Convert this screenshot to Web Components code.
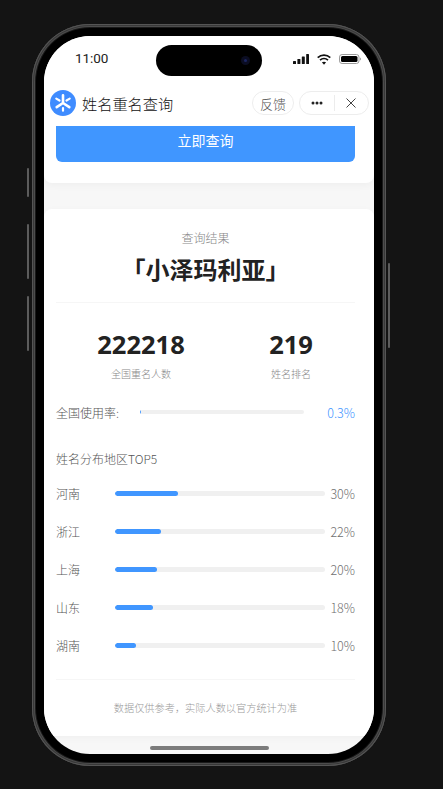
<!DOCTYPE html>
<html lang="zh"><head><meta charset="utf-8">
<style>
html,body{margin:0;padding:0;background:#141414;height:100%;overflow:hidden}
body{font-family:"Noto Sans CJK SC","Noto Sans",sans-serif;font-weight:300}
</style></head>
<body>
<phone-frame>
  <status-bar time="11:00"></status-bar>
  <mini-nav title-text="姓名重名查询"></mini-nav>
  <query-card>立即查询</query-card>
  <result-card>
    <span slot="kicker">查询结果</span>
    <span slot="name">「小泽玛利亚」</span>
    <stat-item slot="stats" value="222218" label="全国重名人数"></stat-item>
    <stat-item slot="stats" value="219" label="姓名排名"></stat-item>
    <usage-row slot="usage" label="全国使用率:" value="0.3"></usage-row>
    <span slot="heading">姓名分布地区TOP5</span>
    <region-row slot="regions" label="河南" value="30"></region-row>
    <region-row slot="regions" label="浙江" value="22"></region-row>
    <region-row slot="regions" label="上海" value="20"></region-row>
    <region-row slot="regions" label="山东" value="18"></region-row>
    <region-row slot="regions" label="湖南" value="10"></region-row>
    <span slot="note">数据仅供参考，实际人数以官方统计为准</span>
  </result-card>
</phone-frame>
<script>
function def(name, html){
  customElements.define(name, class extends HTMLElement{
    connectedCallback(){
      if(this.shadowRoot) return;
      const r=this.attachShadow({mode:'open'});
      r.innerHTML=typeof html==='function'?html(this):html;
    }
  });
}
def('phone-frame',`<style>
:host{display:block;position:relative;box-sizing:border-box;width:354px;height:742px;margin:24px 0 0 32px;border-radius:58px;background:#000;padding:12px;
 box-shadow:inset 0 0 0 1px #555,inset 0 0 0 2px #383838,inset 0 0 0 3px #4c4c4c,inset 0 0 0 4px #1a1a1a}
.screen{display:flex;flex-direction:column;width:330px;height:718px;border-radius:46px;overflow:hidden;background:#f7f7f7;position:relative}
.btn{position:absolute;width:2px;background:#5c5c5c;border-radius:1px}
.l1{left:-5px;top:144px;height:29px}.l2{left:-5px;top:200px;height:55px}.l3{left:-5px;top:272px;height:55px}
.r1{right:-4px;top:239px;height:85px}
.home{position:absolute;left:106px;bottom:4px;width:119px;height:4px;border-radius:2px;background:#7c7c7c}
</style>
<i class="btn l1"></i><i class="btn l2"></i><i class="btn l3"></i><i class="btn r1"></i>
<div class="screen"><slot></slot><div class="home"></div></div>`);
def('status-bar',el=>`<style>
:host{display:flex;align-items:center;justify-content:space-between;height:48px;flex:none;background:#fff;padding:0 13px 2px 31px;box-sizing:border-box;position:relative}
.time{font:400 13.5px/1 Roboto,"Open Sans",sans-serif;color:#222;letter-spacing:-.1px}
.icons{display:flex;align-items:center;gap:8px}
.island{position:absolute;left:112px;top:9px;width:106px;height:31px;border-radius:16px;background:#000}
.cam{position:absolute;right:12px;top:11px;width:9px;height:9px;border-radius:50%;background:#0b0d22}
.cam:after{content:"";position:absolute;left:3px;top:3px;width:3px;height:3px;border-radius:50%;background:#1b2560}
svg{display:block}
</style>
<span class="time">${el.getAttribute('time')}</span>
<div class="island"><div class="cam"></div></div>
<div class="icons">
<svg width="16" height="10" viewBox="0 0 16 10" fill="#111"><rect x="0" y="7" width="3" height="3" rx=".6"/><rect x="4.400" y="5" width="3" height="5" rx=".6"/><rect x="8.800" y="2.500" width="3" height="7.500" rx=".6"/><rect x="13.200" y="0" width="2.800" height="10" rx=".6"/></svg>
<svg width="14" height="11" viewBox="0 0 14 11" fill="none" stroke="#111" stroke-width="1.700"><path d="M.7 3.600C4.300.3 9.700.3 13.300 3.600"/><path d="M3 6.100c2.300-2 5.700-2 8 0"/><path d="M7 10.700 4.900 8.300c1.300-.9 2.900-.9 4.200 0z" fill="#111" stroke="none"/></svg>
<svg width="22" height="10" viewBox="0 0 22 10"><rect x=".5" y=".5" width="19.500" height="9" rx="2.600" fill="none" stroke="#9a9a9a"/><rect x="2" y="2" width="16.500" height="6" rx="1.500" fill="#000"/><path d="M21 3.500c.7.300 1 .9 1 1.500s-.3 1.200-1 1.500z" fill="#9a9a9a"/></svg>
</div>`);
def('mini-nav',el=>`<style>
:host{display:flex;align-items:center;height:42px;flex:none;background:#fff;padding:0 5px 4px 6px;box-sizing:border-box;position:relative;z-index:1}
svg{display:block;flex:none}
.t{margin:0 0 0 6px;font-size:15.200px;font-weight:300;color:#111;flex:1;white-space:nowrap}
.pill{box-sizing:border-box;height:24px;border:1px solid #ededed;border-radius:12px;display:flex;align-items:center;background:#fff}
.fb{width:42px;justify-content:center;font-size:13px;color:#555}
.cap{width:70px;margin-left:5px}
.cap>div{flex:1;display:flex;align-items:center;justify-content:center;height:100%}
.sep{width:1px;height:16px;background:#ececec;flex:none}
</style>
<svg width="26" height="26" viewBox="0 0 26 26"><circle cx="13" cy="13" r="13" fill="#3f8cff"/>
<g stroke="#fff" stroke-width="2.600" stroke-linecap="round" fill="none"><path d="M13 13V5.200M13 13l-6.300 4.200M13 13l6.300 4.200"/><path stroke-width="2.200" d="M6.300 8.600l3.200 1.900M19.700 8.600l-3.200 1.900M13 18v2.700"/></g></svg>
<span class="t">${el.getAttribute('title-text')}</span>
<div class="pill fb">反馈</div>
<div class="pill cap"><div><svg width="12" height="4" viewBox="0 0 12 4" fill="#222"><circle cx="2" cy="2" r="1.500"/><circle cx="6" cy="2" r="1.500"/><circle cx="10" cy="2" r="1.500"/></svg></div><span class="sep"></span><div><svg width="10" height="10" viewBox="0 0 10 10" stroke="#444" stroke-width="1" fill="none"><path d="M.5.500l9 9M9.500.500l-9 9"/></svg></div></div>`);
def('query-card',`<style>
:host{display:block;flex:none;background:#fff;padding:0 19px 21px 12px;border-radius:0 0 8px 8px;box-shadow:0 2px 8px rgba(0,0,0,.04)}
.b{height:36px;background:#4096ff;border-radius:0 0 6px 6px;color:#fff;font-size:14px;font-weight:400;display:flex;align-items:center;justify-content:center;padding-bottom:8px;box-sizing:border-box}
</style><div class="b"><slot></slot></div>`);
def('result-card',`<style>
:host{display:block;flex:none;margin-top:26px;background:#fff;border-radius:8px 8px 0 0;padding:0 19px 0 12px;height:527px;box-sizing:border-box;box-shadow:0 2px 8px rgba(0,0,0,.03)}
.k{text-align:center;font-size:12px;line-height:18px;color:#888;padding-top:20px}
.n{text-align:center;font-size:24px;line-height:34px;font-weight:700;color:#222;margin-top:5px}
.line{height:1px;background:#f6f6f6}
.l1{margin-top:16px}
.stats{display:grid;grid-template-columns:150px 150px;padding-left:10px;margin-top:26px}
.h{font-size:12px;line-height:18px;color:#555;margin-top:29px}
.regions{display:flex;flex-direction:column;gap:18px;margin-top:15px}
.usage{margin-top:22px}
.l2{margin-top:24px}
.note{text-align:center;font-size:10.200px;line-height:14px;color:#999;margin-top:21px}
</style>
<div class="k"><slot name="kicker"></slot></div>
<div class="n"><slot name="name"></slot></div>
<div class="line l1"></div>
<div class="stats"><slot name="stats"></slot></div>
<div class="usage"><slot name="usage"></slot></div>
<div class="h"><slot name="heading"></slot></div>
<div class="regions"><slot name="regions"></slot></div>
<div class="line l2"></div>
<div class="note"><slot name="note"></slot></div>`);
def('stat-item',el=>`<style>
:host{display:block;text-align:center}
.v{font:700 25.500px/32px "Open Sans","Noto Sans",sans-serif;color:#222;margin-top:-1px;padding-bottom:1px}
.l{font-size:10px;line-height:14px;color:#888;margin-top:6px}
</style><div class="v">${el.getAttribute('value')}</div><div class="l">${el.getAttribute('label')}</div>`);
def('usage-row',el=>`<style>
:host{display:flex;align-items:center;height:18px}
.l{width:84px;font-size:12px;color:#555;white-space:nowrap}
.track{width:164px;height:4px;border-radius:2px;background:#f0f0f0;overflow:hidden}
.f{height:100%;width:${el.getAttribute('value')}%;min-width:1px;background:#4096ff}
.v{flex:1;text-align:right;font-size:12.500px;color:#3d94ff}
</style><span class="l">${el.getAttribute('label')}</span><div class="track"><div class="f"></div></div><span class="v">${el.getAttribute('value')}%</span>`);
def('region-row',el=>`<style>
:host{display:flex;align-items:center;height:20px}
.l{width:59px;font-size:12px;color:#555;flex:none}
.track{width:210px;height:5px;border-radius:3px;background:#f0f0f0;overflow:hidden;flex:none}
.f{height:100%;border-radius:3px;width:${el.getAttribute('value')}%;background:#4096ff}
.v{flex:1;text-align:right;font-size:12.500px;color:#707070}
</style><span class="l">${el.getAttribute('label')}</span><div class="track"><div class="f"></div></div><span class="v">${el.getAttribute('value')}%</span>`);
</script>
</body></html>
